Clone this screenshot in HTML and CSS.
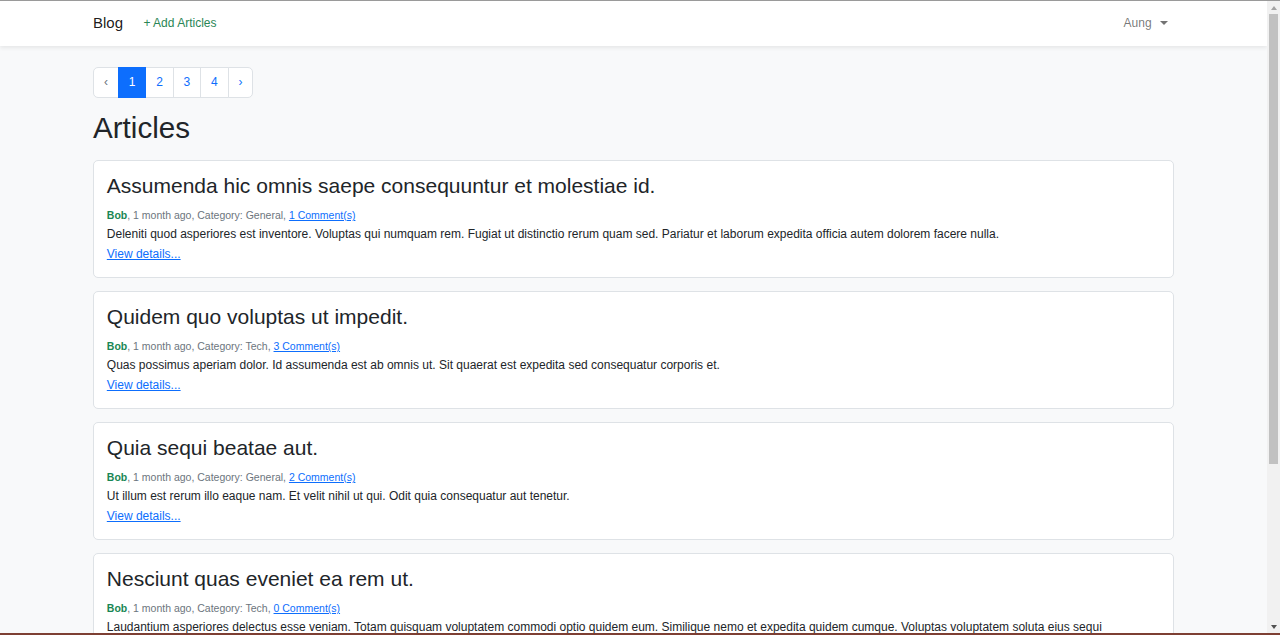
FILE: index.html
```html
<!DOCTYPE html>
<html lang="en">
<head>
<meta charset="utf-8">
<title>Blog</title>
<link rel="stylesheet" href="styles.css">
</head>
<body>
<div class="frame">
  <div class="topline"></div>
  <div class="window">
    <div class="page">
      <nav class="navbar">
        <div class="container nav-inner">
          <div class="nav-left">
            <a class="brand" href="#">Blog</a>
            <a class="nav-link add" href="#">+ Add Articles</a>
          </div>
          <a class="nav-link user" href="#">Aung <span class="caret"></span></a>
        </div>
      </nav>
      <main class="container main">
        <ul class="pagination">
          <li class="page-item disabled"><span class="page-link">&lsaquo;</span></li>
          <li class="page-item active"><span class="page-link">1</span></li>
          <li class="page-item"><a class="page-link" href="#">2</a></li>
          <li class="page-item"><a class="page-link" href="#">3</a></li>
          <li class="page-item"><a class="page-link" href="#">4</a></li>
          <li class="page-item"><a class="page-link" href="#">&rsaquo;</a></li>
        </ul>
        <h1 class="page-title">Articles</h1>

        <div class="card">
          <h3 class="card-title">Assumenda hic omnis saepe consequuntur et molestiae id.</h3>
          <div class="meta"><b class="author">Bob</b>, 1 month ago, Category: General, <a href="#">1 Comment(s)</a></div>
          <div class="card-text">Deleniti quod asperiores est inventore. Voluptas qui numquam rem. Fugiat ut distinctio rerum quam sed. Pariatur et laborum expedita officia autem dolorem facere nulla.</div>
          <a class="details" href="#">View details...</a>
        </div>

        <div class="card">
          <h3 class="card-title">Quidem quo voluptas ut impedit.</h3>
          <div class="meta"><b class="author">Bob</b>, 1 month ago, Category: Tech, <a href="#">3 Comment(s)</a></div>
          <div class="card-text">Quas possimus aperiam dolor. Id assumenda est ab omnis ut. Sit quaerat est expedita sed consequatur corporis et.</div>
          <a class="details" href="#">View details...</a>
        </div>

        <div class="card">
          <h3 class="card-title">Quia sequi beatae aut.</h3>
          <div class="meta"><b class="author">Bob</b>, 1 month ago, Category: General, <a href="#">2 Comment(s)</a></div>
          <div class="card-text">Ut illum est rerum illo eaque nam. Et velit nihil ut qui. Odit quia consequatur aut tenetur.</div>
          <a class="details" href="#">View details...</a>
        </div>

        <div class="card">
          <h3 class="card-title">Nesciunt quas eveniet ea rem ut.</h3>
          <div class="meta"><b class="author">Bob</b>, 1 month ago, Category: Tech, <a href="#">0 Comment(s)</a></div>
          <div class="card-text">Laudantium asperiores delectus esse veniam. Totam quisquam voluptatem commodi optio quidem eum. Similique nemo et expedita quidem cumque. Voluptas voluptatem soluta eius sequi voluptatibus eum. Sint quia voluptatem odio est.</div>
          <a class="details" href="#">View details...</a>
        </div>
      </main>
    </div>
    <div class="scrollbar">
      <div class="sb-btn"><span class="arrow-up"></span></div>
      <div class="sb-track"><div class="sb-thumb"></div></div>
      <div class="sb-btn"><span class="arrow-down"></span></div>
    </div>
  </div>
  <div class="bottomline"></div>
</div>
</body>
</html>
```

FILE: styles.css
```css
* { box-sizing: border-box; }
html, body { margin: 0; padding: 0; }
body {
  font-family: "Liberation Sans", Arial, sans-serif;
  font-size: 12px;
  line-height: 1.6;
  color: #212529;
  height: 635px;
  overflow: hidden;
  background: #f8f9fa;
}
a { color: #0d6efd; }

.frame { display: flex; flex-direction: column; height: 635px; }
.topline { height: 1px; background: #9a9a9a; flex: none; }
.bottomline { height: 2px; background: #7d3f33; flex: none; }
.window { flex: 1; display: flex; min-height: 0; }
.page { flex: 1; overflow: hidden; background: #f8f9fa; }

.scrollbar {
  width: 13px; flex: none; display: flex; flex-direction: column;
  background: #f1f1f1;
}
.sb-btn { height: 13px; display: flex; align-items: center; justify-content: center; flex: none; }
.arrow-up { width: 0; height: 0; border-left: 3.5px solid transparent; border-right: 3.5px solid transparent; border-bottom: 4px solid #a3a3a3; }
.arrow-down { width: 0; height: 0; border-left: 3.5px solid transparent; border-right: 3.5px solid transparent; border-top: 4px solid #505050; }
.sb-track { flex: 1; padding: 0 2px; }
.sb-thumb { height: 450px; background: #c1c1c1; }

.container { max-width: 1105px; margin: 0 auto; padding: 0 12px; }

.navbar {
  background: #fff;
  box-shadow: 0 2px 4px rgba(0,0,0,.075);
  padding: 6.4px 0;
  position: relative;
}
.nav-inner { display: flex; align-items: center; justify-content: space-between; }
.nav-left { display: flex; align-items: center; }
.brand {
  font-size: 15px; line-height: 24px; padding: 4px 0; margin-right: 14px;
  color: rgba(0,0,0,.9); text-decoration: none;
}
.nav-link { padding: 6.4px; text-decoration: none; font-size: 12px; line-height: 19.2px; }
.add { color: #2a8656; }
.user { color: rgba(0,0,0,.55); display: flex; align-items: center; }
.caret {
  display: inline-block; margin-left: 8px; width: 0; height: 0;
  border-top: 4px solid rgba(0,0,0,.55); border-left: 4px solid transparent; border-right: 4px solid transparent;
}

.main { padding-top: 21px; }
.pagination { display: flex; list-style: none; padding: 0; margin: 0 0 12.8px; }
.page-item + .page-item { margin-left: -1px; }
.page-link {
  display: block; padding: 4.8px 9.9px; line-height: 19.2px; font-size: 12px;
  border: 1px solid #dee2e6; background: #fff; color: #0d6efd; text-decoration: none;
}
.page-item:first-child .page-link { border-radius: 5px 0 0 5px; }
.page-item:last-child .page-link { border-radius: 0 5px 5px 0; }
.page-item.active .page-link { background: #0d6efd; border-color: #0d6efd; color: #fff; position: relative; }
.page-item.disabled .page-link { color: #6c757d; }

.page-title { font-size: 29.6px; font-weight: 500; line-height: 1.2; margin: 0 0 14px; }

.card {
  background: #fff; border: 1px solid #dee2e6; border-radius: 5px;
  padding: 12.8px; margin-bottom: 13.2px;
}
.card-title { font-size: 21px; font-weight: 500; line-height: 1.2; margin: -1px 0 8.4px; }
.meta { color: #6c757d; font-size: 10.5px; line-height: 19.2px; }
.author { color: #198754; font-weight: 700; }
.card-text { line-height: 19.2px; }
.details { line-height: 19.2px; }
```
